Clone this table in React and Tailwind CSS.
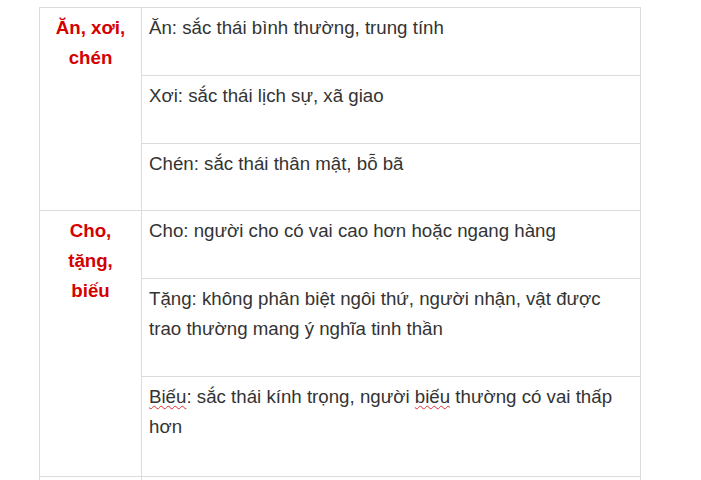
const ROWS = [
  {
    head: ["Ăn, xơi,", "chén"],
    items: [
      { text: "Ăn: sắc thái bình thường, trung tính", pb: "pb-[32px]" },
      { text: "Xơi: sắc thái lịch sự, xã giao", pb: "pb-[32px]" },
      { text: "Chén: sắc thái thân mật, bỗ bã", pb: "pb-[31px]" },
    ],
  },
  {
    head: ["Cho,", "tặng,", "biếu"],
    items: [
      { text: "Cho: người cho có vai cao hơn hoặc ngang hàng", pb: "pb-[32px]" },
      {
        text: "Tặng: không phân biệt ngôi thứ, người nhận, vật được trao thường mang ý nghĩa tinh thần",
        pb: "pb-[32px]",
      },
      { text: "biếu", pb: "pb-[34px]" },
    ],
  },
];

function Squiggle({ children }) {
  return (
    <span className="underline decoration-wavy decoration-[#e03030] decoration-1 underline-offset-[2px]">
      {children}
    </span>
  );
}

export default function App() {
  return (
    <div className="w-[701px] h-[480px] bg-white overflow-hidden pt-[7px] pl-[39px] font-['Liberation_Sans',Arial,sans-serif] text-[18.7px] leading-[30px] text-[#333]">
      <table className="border-collapse w-[602px] table-fixed">
        <colgroup>
          <col className="w-[102px]" />
          <col />
        </colgroup>
        <tbody>
          {ROWS.map((row, ri) =>
            row.items.map((item, ii) => (
              <tr key={ri + "-" + ii}>
                {ii === 0 && (
                  <td
                    rowSpan={row.items.length}
                    className="border border-[#dcdcdc] align-top text-center font-bold text-[#d40000] pt-[5px] px-[6px]"
                  >
                    {row.head.map((h) => (
                      <div key={h}>{h}</div>
                    ))}
                  </td>
                )}
                <td className={"border border-[#dcdcdc] align-top pt-[5px] pl-[7px] pr-[10px] " + item.pb}>
                  {item.text === "biếu" ? (
                    <>
                      <Squiggle>Biếu</Squiggle>: sắc thái kính trọng, người <Squiggle>biếu</Squiggle> thường có vai thấp hơn
                    </>
                  ) : (
                    item.text
                  )}
                </td>
              </tr>
            ))
          )}
          <tr>
            <td className="border border-[#dcdcdc] h-[40px]"></td>
            <td className="border border-[#dcdcdc] h-[40px]"></td>
          </tr>
        </tbody>
      </table>
    </div>
  );
}
